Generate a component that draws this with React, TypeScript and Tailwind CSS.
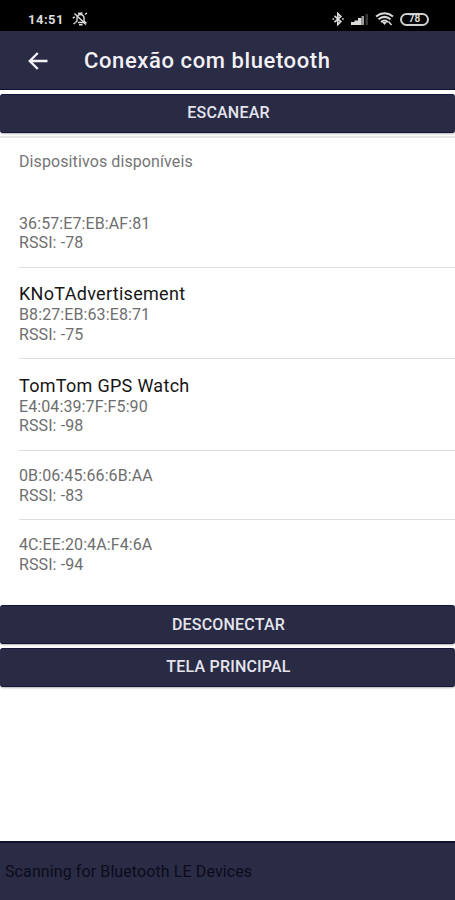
import clsx from "clsx";

type Device = {
    name?: string;
    address: string;
    rssi: number;
};

const devices: Device[] = [
    { address: "36:57:E7:EB:AF:81", rssi: -78 },
    { name: "KNoTAdvertisement", address: "B8:27:EB:63:E8:71", rssi: -75 },
    { name: "TomTom GPS Watch", address: "E4:04:39:7F:F5:90", rssi: -98 },
    { address: "0B:06:45:66:6B:AA", rssi: -83 },
    { address: "4C:EE:20:4A:F4:6A", rssi: -94 },
];

function StatusBar() {
    return (
        <div className="h-[31px] bg-black flex items-start pt-[12px] pl-[28px] pr-[26px] text-[#dcdcdc]">
            <span className="text-[13px] leading-[15px] font-bold tracking-[0.5px]">14:51</span>
            {/* Silent mode */}
            <svg className="ml-[8px]" width="16" height="14" viewBox="0 0 16 14" fill="none" stroke="currentColor" strokeWidth="1.4">
                <path d="M3.5 10.500 5 9V6a3.500 3.500 0 0 1 7 0v3l1.500 1.500H6M7 12.800h3.500" />
                <path d="M2.500 1.500 14 12.500M.8 6l2-1M13 2.500l2-1.500M6 1.500 10.500 1M1.500 12l2-1.500" />
            </svg>

            <div className="ml-auto flex items-center h-[14px]">
                {/* Bluetooth */}
                <svg width="12" height="14" viewBox="0 0 12 14" fill="none" stroke="currentColor" strokeWidth="1.6">
                    <path d="m2.500 3.800 6.400 5.800-3.100 3V1.400l3.100 3-6.400 5.800" />
                    <path d="M.5 7h1.700M10 7h1.700" />
                </svg>
                {/* Signal */}
                <svg className="ml-[7px]" width="18" height="12" viewBox="0 0 18 12" fill="currentColor">
                    <path d="M0 9h3.500v3H0zM3.500 7.500h3.500V12H3.500zM7 5h3.500v7H7z" />
                    <path d="M10.500 3h2.500v9h-2.500z" opacity=".7" />
                    <path d="M14.500 1H17v11h-2.500z" opacity=".25" />
                </svg>
                {/* Wifi */}
                <svg className="ml-[6px]" width="19" height="14" viewBox="0 0 19 14" fill="none" stroke="currentColor" strokeWidth="2">
                    <path d="M1 4.500Q9.500-2 18 4.500M3.500 7.300q6-4.800 12 0M6 10q3.500-3 7 0" />
                    <path d="m7 10 2.500 3 2.500-3Z" fill="currentColor" stroke="none" />
                    <path d="m13.500 9.500 3 3.500" strokeWidth="1.500" />
                </svg>
                <div className="ml-[6px] w-[29px] h-[13px] rounded-full border-2 border-[#cfcfcf] flex items-center justify-center text-[10px] leading-none font-bold">
                    78
                </div>
            </div>
        </div>
    );
}

function Header() {
    return (
        <header className="h-[59px] bg-[#2a2b45] border-b border-[#10112e] flex items-center pt-px pl-[28px] text-[#f1f1f6]">
            <svg width="20" height="18" viewBox="0 0 20 18" fill="none" stroke="currentColor" strokeWidth="2.400">
                <path d="M19.500 9H2M9.800 1 1.800 9l8 8" />
            </svg>
            <h1 className="ml-[36px] text-[22px] leading-7 font-medium tracking-[0.6px]">Conexão com bluetooth</h1>
        </header>
    );
}

function Button({ label, className }: { label: string; className?: string }) {
    return (
        <button
            className={clsx(
                "block w-full h-[39px] pl-[2px] rounded-[3px] bg-[#292a44] border-y border-[#15163a] text-[#e4e4ec] text-[16px] leading-5 font-medium text-center tracking-[0.2px] shadow-[0_1px_2px_rgba(0,0,0,0.3)]",
                className,
            )}
        >
            {label}
        </button>
    );
}

function DeviceRow({ device, last }: { device: Device; last: boolean }) {
    return (
        <li className={clsx("ml-[19px] pt-[15px] pb-[13.500px] text-[16px] leading-[19.800px] text-[#6e6e6e] tracking-[0.1px]", !last && "border-b border-[#dedede]")}>
            {device.name && (
                <p className="pt-[0.500px] text-[18px] leading-[22px] text-[#161616] tracking-[0.300px]">{device.name}</p>
            )}
            <p>{device.address}</p>
            <p>RSSI: {device.rssi}</p>
        </li>
    );
}

export default function App() {
    return (
        <div className="w-full h-[900px] flex flex-col bg-white font-[Roboto,sans-serif] overflow-hidden">
            <StatusBar />
            <Header />

            <Button label="ESCANEAR" className="mt-[4px] pb-px" />

            <section className="mt-[3px] h-[469px] border-t-2 border-[#e6e6e8]">
                <h2 className="pt-[12px] pl-[19px] h-[60.500px] text-[16px] leading-6 text-[#757575] tracking-[0.1px]">Dispositivos disponíveis</h2>
                <ul>
                    {devices.map((device, i) => (
                        <DeviceRow key={device.address} device={device} last={i === devices.length - 1} />
                    ))}
                </ul>
            </section>

            <Button label="DESCONECTAR" />
            <Button label="TELA PRINCIPAL" className="mt-[4px] pb-px" />

            <footer className="mt-auto h-[59px] bg-[#2a2b45] border-t-2 border-[#10112e] flex items-center pl-[5px] text-[16px] tracking-[0.1px] text-[#0b0b1c]">
                Scanning for Bluetooth LE Devices
            </footer>
        </div>
    );
}
